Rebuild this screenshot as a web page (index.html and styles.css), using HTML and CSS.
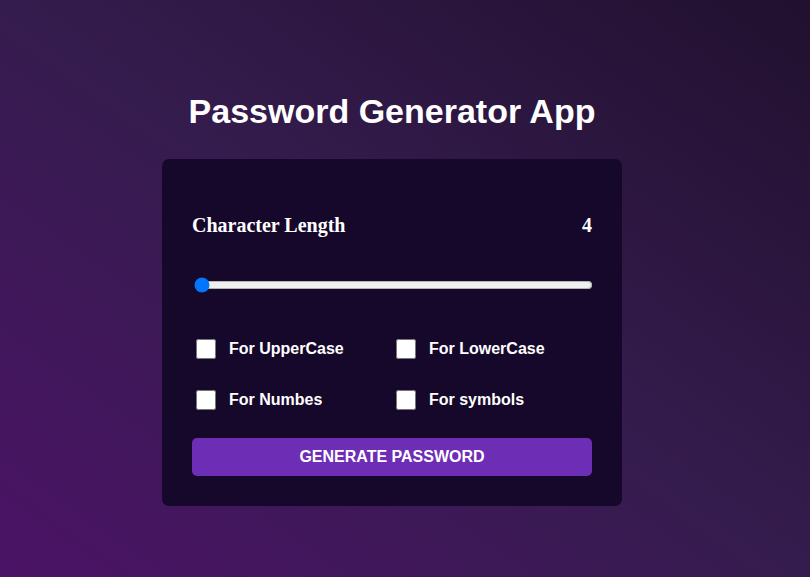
FILE: index.html
```html
<!DOCTYPE html>
<html lang="en">
<head>
<meta charset="UTF-8">
<title>Password Generator App</title>
<link rel="stylesheet" href="styles.css">
</head>
<body>
  <main class="app">
    <h1 class="title">Password Generator App</h1>
    <section class="card">
      <div class="length-row">
        <span class="length-label">Character Length</span>
        <span class="length-value">4</span>
      </div>
      <input class="slider" type="range" min="4" max="20" value="4">
      <div class="options">
        <label class="option"><input type="checkbox"><span>For UpperCase</span></label>
        <label class="option"><input type="checkbox"><span>For LowerCase</span></label>
        <label class="option"><input type="checkbox"><span>For Numbes</span></label>
        <label class="option"><input type="checkbox"><span>For symbols</span></label>
      </div>
      <button class="generate">GENERATE PASSWORD</button>
    </section>
  </main>
</body>
</html>
```

FILE: styles.css
```css
html, body {
  margin: 0;
  padding: 0;
}

body {
  min-height: 100vh;
  background: linear-gradient(to top right, #4b1366 0%, #351c4e 50%, #21102f 100%);
  font-family: "Liberation Sans", Arial, sans-serif;
  color: #fff;
}

.app {
  display: flex;
  flex-direction: column;
  align-items: center;
  padding: 92px 26px 0 0;
}

.title {
  margin: 0 0 29px;
  font-size: 34px;
  font-weight: bold;
  line-height: 38px;
}

.card {
  box-sizing: border-box;
  width: 460px;
  background: #16082a;
  border-radius: 7px;
  padding: 55px 30px 30px;
  display: flex;
  flex-direction: column;
}

.length-row {
  display: flex;
  justify-content: space-between;
  align-items: center;
  font-family: "Liberation Serif", "Times New Roman", serif;
  font-weight: bold;
  font-size: 20px;
  line-height: 23px;
}

.slider {
  margin: 40px 0 0 2px;
  width: 399px;
  height: 16px;
}

.options {
  display: grid;
  grid-template-columns: 200px 200px;
  row-gap: 25px;
  margin-top: 43px;
}

.option {
  display: flex;
  align-items: center;
  font-size: 16px;
  font-weight: bold;
}

.option input {
  width: 20px;
  height: 20px;
  margin: 3px 13px 3px 4px;
}

.generate {
  margin-top: 25px;
  height: 38px;
  border: none;
  border-radius: 5px;
  background: #6d2db5;
  color: #fff;
  font-family: "Liberation Sans", Arial, sans-serif;
  font-size: 16px;
  font-weight: bold;
}
```
